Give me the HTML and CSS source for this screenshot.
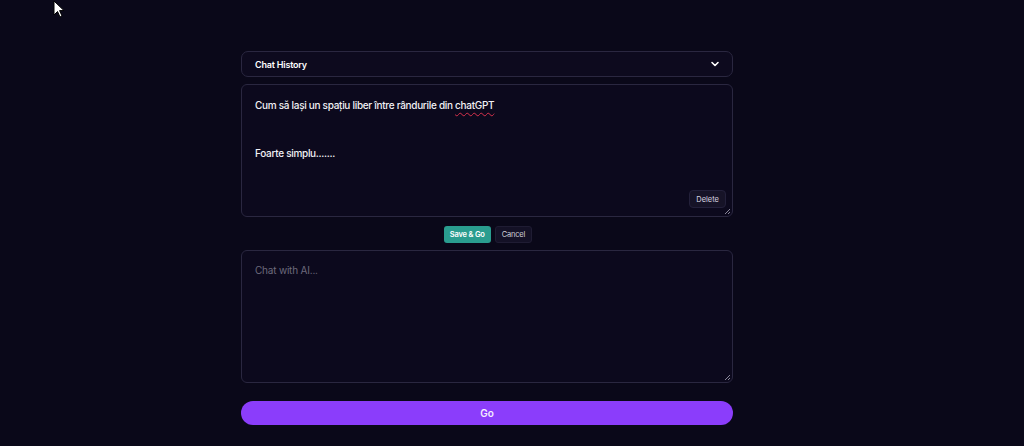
FILE: index.html
```html
<!DOCTYPE html>
<html lang="ro">
<head>
<meta charset="utf-8">
<title>Chat</title>
<link rel="stylesheet" href="styles.css">
</head>
<body>
<svg class="cursor" width="12" height="18" viewBox="0 0 12 18"><path d="M1 1 L1 15 L4.5 11.5 L7 17 L9 16 L6.6 10.6 L11 10.6 Z" fill="#fff" stroke="#000" stroke-width="1"/></svg>
<main class="panel">
  <div class="select">
    <span class="select-label">Chat History</span>
    <svg class="chev" width="10" height="10" viewBox="0 0 10 10"><path d="M2 3.5 L5 6.5 L8 3.5" fill="none" stroke="#fff" stroke-width="1.6" stroke-linecap="round" stroke-linejoin="round"/></svg>
  </div>
  <div class="editor">
    <div class="editor-text">
      <p>Cum să lași un spațiu liber între rândurile din <span class="spell">chatGPT</span></p>
      <p>&nbsp;</p>
      <p>&nbsp;</p>
      <p>Foarte simplu.......</p>
    </div>
    <button class="delete">Delete</button>
    <svg class="grip" width="7" height="7" viewBox="0 0 7 7"><path d="M6 1 L1 6 M6 4 L4 6" stroke="#8a879a" stroke-width="1"/></svg>
  </div>
  <div class="actions">
    <button class="save">Save &amp; Go</button>
    <button class="cancel">Cancel</button>
  </div>
  <div class="chatbox">
    <span class="placeholder">Chat with AI...</span>
    <svg class="grip" width="7" height="7" viewBox="0 0 7 7"><path d="M6 1 L1 6 M6 4 L4 6" stroke="#8a879a" stroke-width="1"/></svg>
  </div>
  <button class="go">Go</button>
</main>
</body>
</html>
```
FILE: styles.css
```css
html, body {
  margin: 0;
  padding: 0;
  background: #0a0819;
  height: 100%;
  overflow: hidden;
}
body {
  font-family: Inter, "Noto Sans", sans-serif;
  color: #fff;
  position: relative;
}
.cursor {
  position: absolute;
  left: 53px;
  top: 0;
}
.panel {
  width: 492px;
  margin: 51px 0 0 241px;
  display: flex;
  flex-direction: column;
}
.select {
  height: 26px;
  box-sizing: border-box;
  border: 1px solid #2a2740;
  border-radius: 7px;
  background: #0d0a1e;
  display: flex;
  align-items: center;
  justify-content: space-between;
  padding: 0 12px 0 13px;
}
.select-label {
  font-size: 9px;
  font-weight: 600;
  letter-spacing: -0.2px;
}
.chev { display: block; }
.editor {
  margin-top: 7px;
  height: 133px;
  box-sizing: border-box;
  border: 1px solid #2a2740;
  border-radius: 6px;
  background: #0c091d;
  position: relative;
  padding: 12px 13px;
}
.editor-text p {
  margin: 0;
  font-size: 10px;
  font-weight: 500;
  line-height: 16px;
  letter-spacing: -0.3px;
  color: #f2f1f6;
}
.spell {
  text-decoration: underline wavy #d8304c;
  text-decoration-thickness: 1px;
  text-underline-offset: 3px;
}
.delete {
  position: absolute;
  right: 6px;
  bottom: 8px;
  height: 18px;
  padding: 0 6px;
  font-family: inherit;
  font-size: 7.5px;
  color: #d8d6e0;
  background: #161327;
  border: 1px solid #23203a;
  border-radius: 4px;
}
.grip {
  position: absolute;
  right: 1px;
  bottom: 1px;
}
.actions {
  display: flex;
  justify-content: center;
  gap: 4px;
  margin-top: 9px;
  padding-left: 2px;
}
.actions button {
  height: 17px;
  font-family: inherit;
  font-size: 7.5px;
  letter-spacing: -0.2px;
  border-radius: 3px;
  padding: 0 6px;
}
.save {
  background: #2a9d8f;
  color: #fff;
  border: none;
  font-weight: 600;
}
.cancel {
  background: #141126;
  color: #d0cfd8;
  border: 1px solid #1f1c33;
}
.chatbox {
  margin-top: 7px;
  height: 133px;
  box-sizing: border-box;
  border: 1px solid #2a2740;
  border-radius: 6px;
  background: #0c091d;
  position: relative;
  padding: 7px 13px;
}
.placeholder {
  font-size: 10px;
  color: #6c6a7c;
  letter-spacing: -0.2px;
}
.go {
  margin-top: 18px;
  height: 24px;
  border: none;
  border-radius: 12px;
  background: #8b3dfb;
  color: #f4ecff;
  font-family: inherit;
  font-size: 10px;
  font-weight: 600;
}
```
